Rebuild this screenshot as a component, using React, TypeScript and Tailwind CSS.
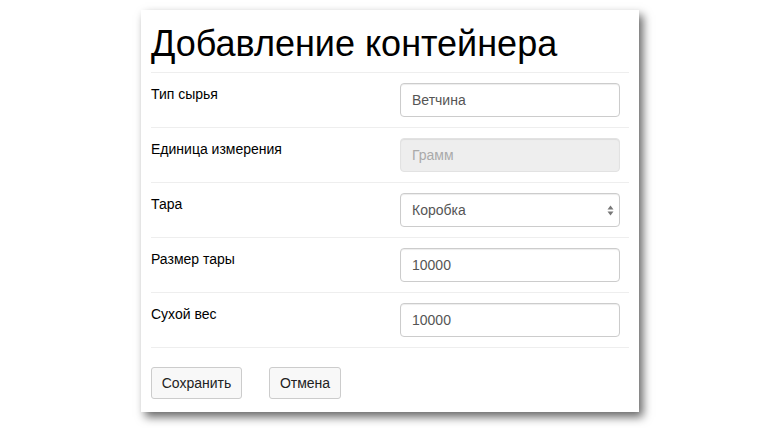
import React from 'react';

const ROWS = [
  { label: 'Тип сырья', value: 'Ветчина', kind: 'text' },
  { label: 'Единица измерения', value: 'Грамм', kind: 'disabled' },
  { label: 'Тара', value: 'Коробка', kind: 'select' },
  { label: 'Размер тары', value: '10000', kind: 'text' },
  { label: 'Сухой вес', value: '10000', kind: 'text' },
];

const App: React.FC = () => {
  return (
    <div className="w-[780px] h-[428px] bg-white pt-[10px] pl-[141px]" style={{ fontFamily: '"Liberation Sans", Arial, sans-serif' }}>
      <div className="w-[498px] h-[402px] bg-white px-[10px] shadow-[4px_5px_9px_rgba(0,0,0,0.6)]">
        <h1 className="h-[63px] border-b border-[#eeeeee] text-[36px] leading-[40px] pt-[14px] text-black">
          Добавление контейнера
        </h1>

        {ROWS.map((row) => (
          <div key={row.label} className="h-[55px] border-b border-[#eeeeee] flex items-start justify-between pr-[9px] pt-[10px]">
            <label className="text-[14px] leading-[20px] text-black pt-[1px]">{row.label}</label>
            {row.kind === 'select' ? (
              <div className="relative w-[220px] h-[34px] rounded-[4px] border border-[#cccccc] bg-white shadow-[inset_0_1px_1px_rgba(0,0,0,0.075)] flex items-center px-[11px]">
                <span className="text-[14px] text-[#555555]">{row.value}</span>
                <svg className="absolute right-[5px] top-[11px]" width="7" height="11" viewBox="0 0 7 11">
                  <path d="M3.5 0.5 L6.5 4.5 L0.5 4.5 Z" fill="#777" />
                  <path d="M3.5 10.5 L6.5 6.5 L0.5 6.5 Z" fill="#777" />
                </svg>
              </div>
            ) : (
              <input
                readOnly
                disabled={row.kind === 'disabled'}
                value={row.value}
                className={`w-[220px] h-[34px] rounded-[4px] border border-[#cccccc] px-[11px] text-[14px] outline-none shadow-[inset_0_1px_1px_rgba(0,0,0,0.075)] ${
                  row.kind === 'disabled' ? 'bg-[#eeeeee] text-[#aaaaaa] border-[#e2e2e2]' : 'bg-white text-[#555555]'
                }`}
                style={{ fontFamily: '"Liberation Sans", Arial, sans-serif' }}
              />
            )}
          </div>
        ))}

        <div className="flex gap-[27px] pt-[19px]">
          <button className="w-[91px] h-[32px] rounded-[3px] border border-[#cccccc] bg-[#f8f8f8] text-[14px] text-[#222222]">
            Сохранить
          </button>
          <button className="w-[72px] h-[32px] rounded-[3px] border border-[#cccccc] bg-[#f8f8f8] text-[14px] text-[#222222]">
            Отмена
          </button>
        </div>
      </div>
    </div>
  );
};

export default App;
